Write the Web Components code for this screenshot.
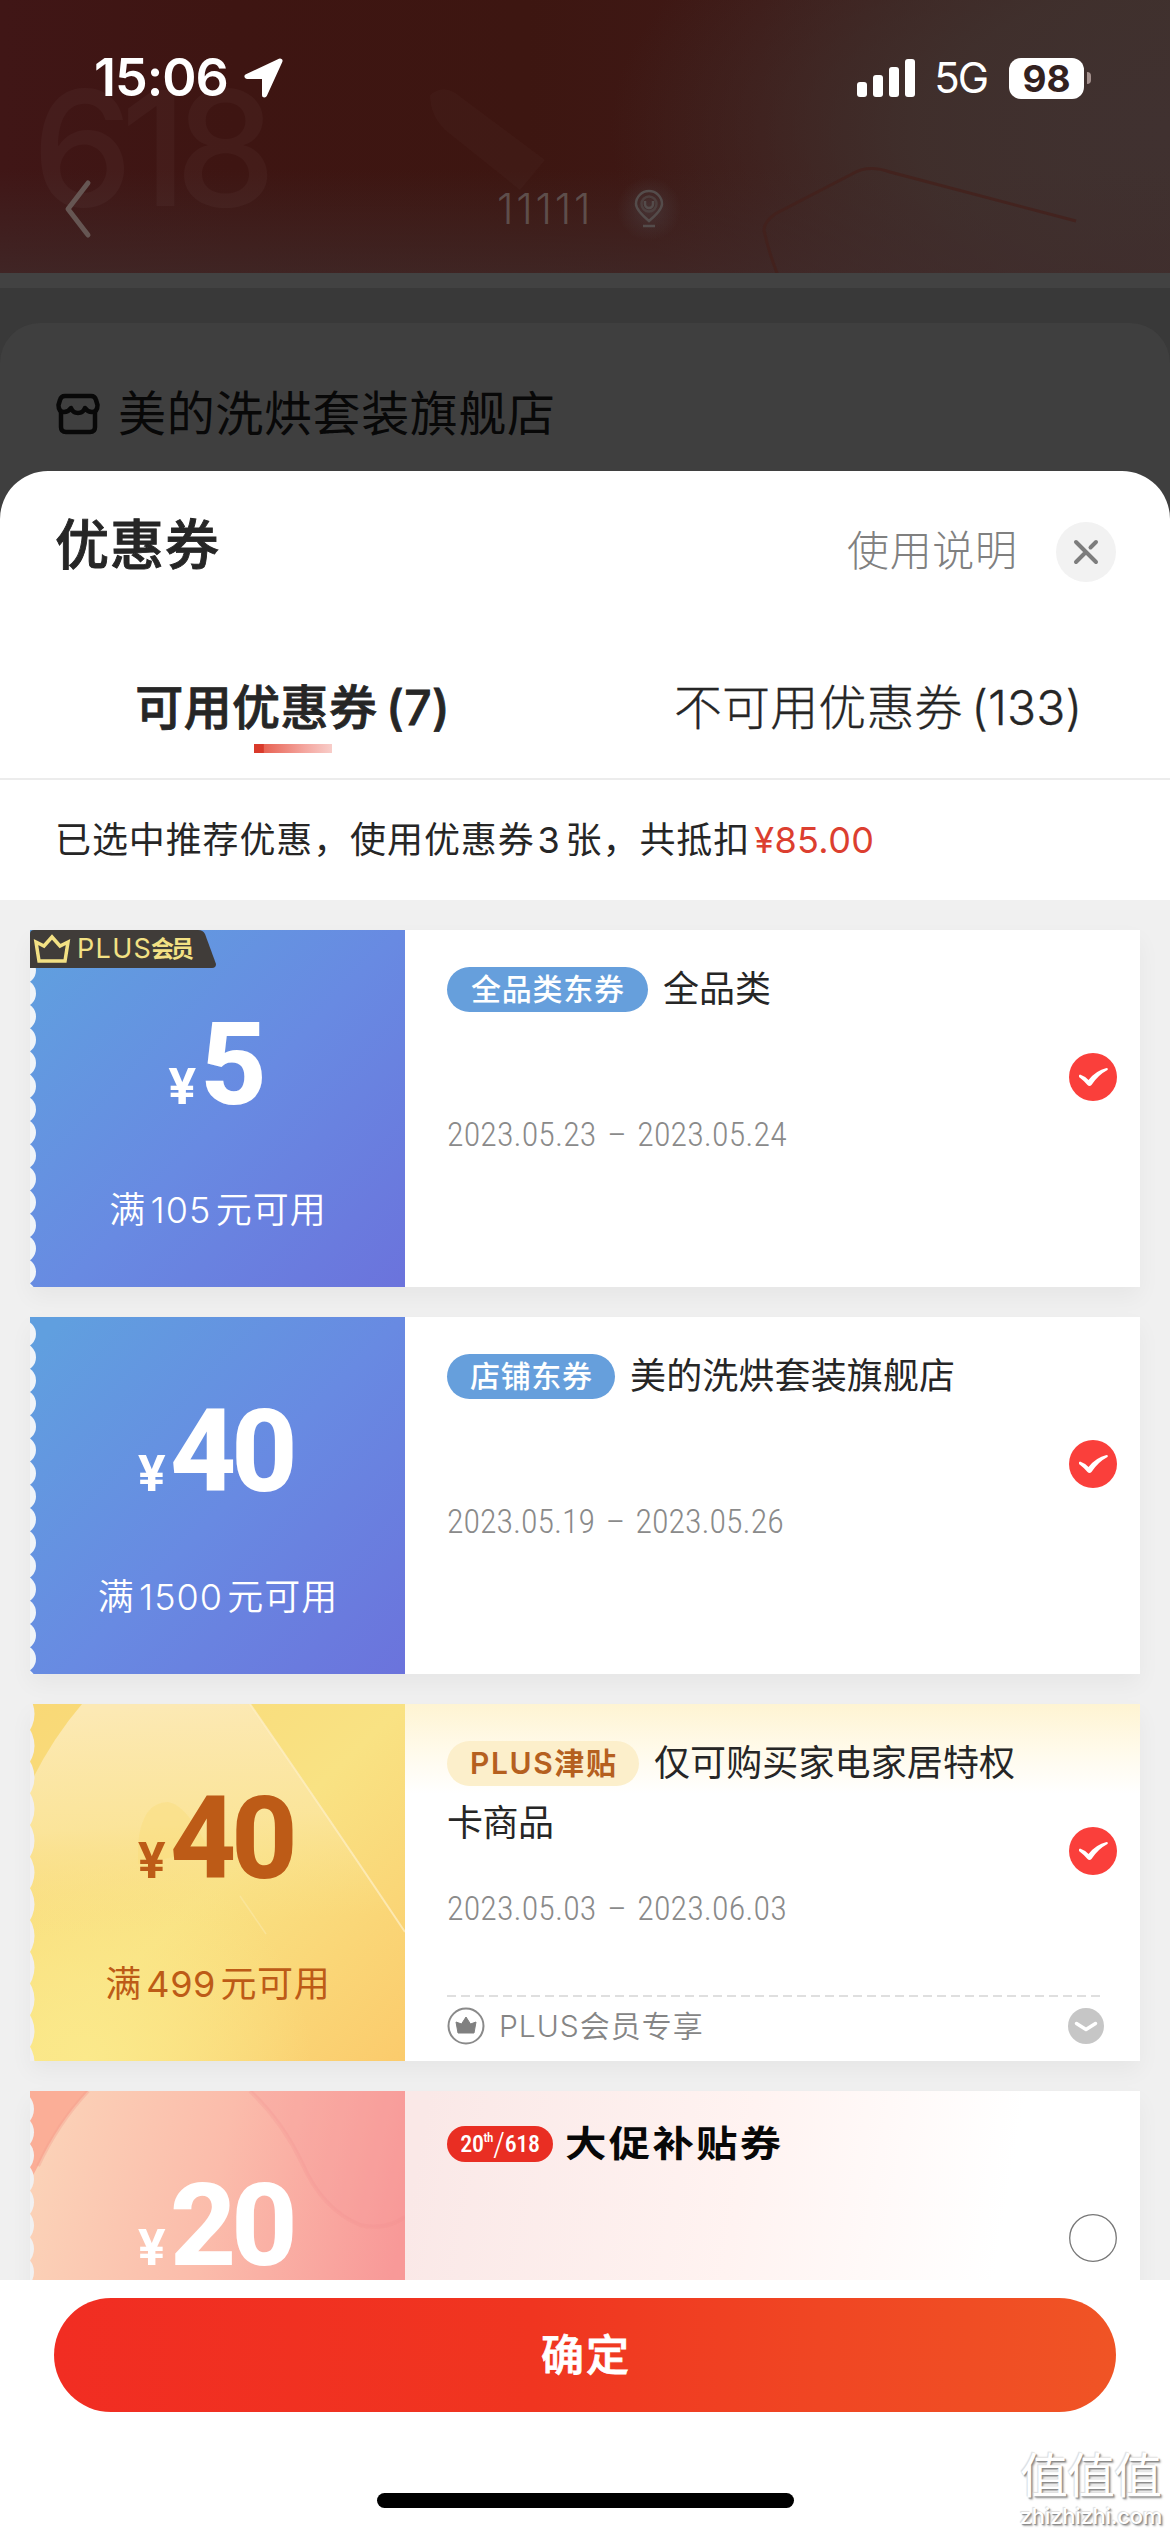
<!DOCTYPE html>
<html lang="zh-CN">
<head>
<meta charset="utf-8">
<title>优惠券</title>
<style>
html,body{margin:0;padding:0}
body{width:1170px;height:2532px;overflow:hidden;background:#3f3f3f;font-family:Inter,"Noto Sans CJK SC",sans-serif;color:#262626}
</style>
</head>
<body>
<coupon-app></coupon-app>
<script>
const define = (name, html, setup) => customElements.define(name, class extends HTMLElement {
  constructor() {
    super();
    this.attachShadow({ mode: 'open' });
  }
  connectedCallback() {
    this.shadowRoot.innerHTML = typeof html === 'function' ? html(this) : html;
    if (setup) setup(this);
  }
});

/* Tracks its text so that the line is exactly `w` pixels wide. */
define('fit-text', '<style>:host{display:inline-block;white-space:nowrap;flex:none}</style><slot></slot>', el => {
  const n = el.textContent.length - 1;
  const w = +el.getAttribute('w');
  const natural = el.offsetWidth;
  if (n < 1 || !natural) return;
  const ls = (w - natural) / n;
  el.style.letterSpacing = ls + 'px';
  el.style.marginRight = -ls + 'px';
});

define('status-bar', `
<style>
:host{display:flex;height:156px;padding:0 79px 0 94px;justify-content:space-between;align-items:center;color:#fff}
.l,.r{display:flex;align-items:center}
.time{font-size:52px;font-weight:600;line-height:60px}
.loc{margin-left:15px}
.net{font-size:42px;line-height:60px;margin-left:19px}
.bat{width:75px;height:41px;border-radius:12px;background:#fff;color:#33211f;font-weight:700;font-size:37px;line-height:41px;text-align:center;margin-left:20px}
.nub{width:4px;height:12px;border-radius:0 4px 4px 0;background:#a4918e;margin-left:3px}
</style>
<div class="l"><fit-text class="time" w="135">15:06</fit-text>
<svg class="loc" width="40" height="40" viewBox="0 0 40 40"><path d="M36 3 L3 18.500 H20.500 V37 Z" fill="#fff" stroke="#fff" stroke-width="5" stroke-linejoin="round"/></svg></div>
<div class="r"><svg width="58" height="38" viewBox="0 0 58 38" fill="#fff"><rect y="23" width="10" height="15" rx="3"/><rect x="16" y="16" width="10" height="22" rx="3"/><rect x="32" y="8" width="10" height="30" rx="3"/><rect x="48" width="10" height="38" rx="3"/></svg>
<fit-text class="net" w="55">5G</fit-text><div class="bat">98</div><div class="nub"></div></div>`);

define('shop-backdrop', `
<style>
:host{display:block;height:471px;background:#3f3f3f}
.hero{height:273px;position:relative;background:
 linear-gradient(to top,rgba(64,45,45,.65),rgba(64,40,40,0) 38%),
 radial-gradient(560px 300px at 1170px 130px,#403130 0%,rgba(64,49,46,.85) 45%,rgba(64,47,44,0) 100%),
 linear-gradient(90deg,#401616 0,#3e1512 20%,#3d1611 45%,#3f1916 65%,#3d2421 85%,#3d2f2b 100%)}
.art{position:absolute;left:0;top:0}
.nav{position:relative;display:flex;height:105px;align-items:center;padding-left:63px}
.addr{margin-left:404px;font-size:42px;font-weight:350;color:#5e4e4b;line-height:50px}
.pin{margin-left:26px}
.strip{height:15px;background:#424242}
.gap{height:35px;background:#393939}
.card{background:#3f3f3f;height:148px;border-radius:40px 40px 0 0;display:flex;align-items:center;padding:0 56px;color:#080808}
.wrap{background:#393939}
.name{font-size:48px;line-height:60px;margin-left:18px}
.row{display:flex;align-items:center;height:60px;margin-top:34px}
</style>
<div class="hero">
<svg class="art" width="1170" height="273" viewBox="0 0 1170 273">
<text x="32" y="206" font-family="Inter,sans-serif" font-size="160" font-weight="500" textLength="244" fill="#fff" opacity=".027">618</text>
<path d="M430 95 Q445 82 462 98 L545 160 L520 190 L445 130 Q430 115 430 95Z" fill="#fff" opacity=".02"/>
<path d="M777 273 Q768 250 764 230 Q764 222 775 214 L852 174 Q868 164 890 172 L1076 221" fill="none" stroke="#44201b" stroke-width="3" opacity=".8"/>
</svg>
<status-bar></status-bar>
<div class="nav">
<svg width="30" height="60" viewBox="0 0 30 60"><path d="M25 4 L5 30 L25 56" fill="none" stroke="#665653" stroke-width="5" stroke-linecap="round" stroke-linejoin="round"/></svg>
<fit-text class="addr" w="94">11111</fit-text>
<svg class="pin" width="64" height="64" viewBox="0 0 64 64"><defs><radialGradient id="g"><stop offset="0" stop-color="#505056" stop-opacity=".4"/><stop offset="1" stop-color="#505056" stop-opacity="0"/></radialGradient></defs><circle cx="32" cy="32" r="32" fill="url(#g)"/><g fill="none" stroke="#544c4b" stroke-width="2.500"><path d="M32 44 Q19 33 19 27 A13 13 0 0 1 45 27 Q45 33 32 44Z"/><path d="M28 24 V27 A4 4 0 0 0 36 27 V24 M26 49 H38"/><circle cx="32" cy="27" r="7.500" opacity=".6"/></g></svg>
</div>
</div>
<div class="strip"></div><div class="gap"></div>
<div class="wrap"><div class="card"><div class="row">
<svg width="44" height="42" viewBox="0 0 44 42" fill="none" stroke="#080808" stroke-width="4.500" stroke-linejoin="round"><path d="M5 17 V34 Q5 39 10 39 H34 Q39 39 39 34 V17"/><path d="M9 3 H35 Q39 3 40 7 L41.500 12 Q41.500 19 36 19 Q31.500 19 29 15 Q27 20 22 20 Q17 20 15 15 Q12.500 19 8 19 Q2.500 19 2.500 12 L4 7 Q5 3 9 3Z"/></svg>
<fit-text class="name" w="437">美的洗烘套装旗舰店</fit-text></div></div></div>`);

define('sheet-header', `
<style>
:host{display:flex;align-items:center;justify-content:space-between;height:134px;padding:14px 54px 0 55px;box-sizing:border-box}
.t{font-size:54px;font-weight:500;-webkit-text-stroke:.9px #262626;line-height:60px;padding-top:1px}
.r{display:flex;align-items:center;height:60px;padding-top:14px}
.help{font-size:42px;font-weight:300;color:#808080;line-height:60px;padding-bottom:2px}
.x{width:60px;height:60px;border-radius:50%;background:#f2f2f2;margin-left:39px;display:flex;align-items:center;justify-content:center}
</style>
<fit-text class="t" w="164">优惠券</fit-text>
<div class="r"><fit-text class="help" w="170">使用说明</fit-text>
<div class="x"><svg width="28" height="28" viewBox="0 0 28 28" stroke="#7d7d7d" stroke-width="4" stroke-linecap="round"><path d="M4 4 24 24 M24 4 18.500 9.500 M14 14 4 24"/></svg></div></div>`);

define('coupon-tabs', `
<style>
:host{display:flex;height:175px;box-sizing:border-box;border-bottom:2px solid #ececec;font-size:48px;line-height:60px}
div{width:585px;display:flex;flex-direction:column;align-items:center;padding-top:73px}
.on{font-weight:500;-webkit-text-stroke:.8px #262626}
.off{font-weight:300;-webkit-text-stroke:.3px #262626;width:auto;padding-left:89px}
i{width:78px;height:9px;margin-top:6px;background:linear-gradient(90deg,#d93a2b 0 12%,#e86354 13%,#f4a69f 65%,#f8cdc9)}
.n{margin-left:.18em}
</style>
<div class="on"><fit-text w="314">可用优惠券<span class="n">(7)</span></fit-text><i></i></div>
<div class="off"><fit-text w="408">不可用优惠券<span class="n">(133)</span></fit-text></div>`);

define('coupon-summary', `
<style>
:host{display:flex;height:120px;align-items:center;padding-left:55px;font-size:36px;line-height:60px}
span{margin:0 .14em 0 .08em}
b{font-weight:400;color:#dc3f30;margin-left:5px}
</style>
<fit-text w="694">已选中推荐优惠，使用优惠券<span>3</span>张，共抵扣</fit-text><b><fit-text w="120">¥85.00</fit-text></b>`);

define('coupon-tag', `
<style>
:host{display:inline-flex;align-items:center;justify-content:center;height:45px;border-radius:23px;background:#669fdc;color:#fff;font-size:30px;font-weight:500;line-height:45px;flex:none}
:host([kind=plus]){background:#fcefcb;color:#b5601f;font-weight:600}
:host([kind=promo]){height:36px;background:#e92e23;font:500 24px/36px Roboto,sans-serif;font-stretch:85%;letter-spacing:-.3px;margin-bottom:12px}
</style><slot></slot>`, el => { el.style.width = el.getAttribute('w') + 'px'; });

const scallops = (pitch, depth, first, color) => {
  const r = ((pitch / 2) ** 2 + depth ** 2) / (2 * depth);
  let s = '';
  for (let y = first; y < 372; y += pitch) s += `<circle cx="${depth - r}" cy="${y}" r="${r}"/>`;
  return `<g fill="${color}">${s}</g>`;
};
const art = {
  blue: `<defs><linearGradient id="b" x1="0" y1="0.100" x2="1" y2="1"><stop offset="0" stop-color="#609fdf"/><stop offset=".5" stop-color="#688ae2"/><stop offset="1" stop-color="#6b73dc"/></linearGradient></defs>
   <rect width="375" height="357" fill="url(#b)"/>` + scallops(23.2, 6, 17, '#f0f4f8'),
  gold: `<defs><linearGradient id="b" x1="0" y1="0" x2="1" y2="1"><stop offset="0" stop-color="#f9d876"/><stop offset=".5" stop-color="#f9e283"/><stop offset="1" stop-color="#fbcb6c"/></linearGradient>
   <linearGradient id="l" x1=".4" y1="0" x2=".5" y2="1"><stop offset="0" stop-color="#fce9b4"/><stop offset=".45" stop-color="#fbe59d" stop-opacity=".9"/><stop offset=".85" stop-color="#fade87" stop-opacity="0"/></linearGradient>
   <radialGradient id="y" cx=".15" cy="1" r=".6"><stop offset="0" stop-color="#fbe98b"/><stop offset="1" stop-color="#fbe98b" stop-opacity="0"/></radialGradient></defs>
   <rect width="375" height="357" fill="url(#b)"/><rect width="375" height="357" fill="url(#y)"/>
   <path d="M52 0 H220 Q296 110 375 228 V260 H0 V80 Q22 35 52 0Z" fill="url(#l)"/>
   <path d="M220 0 Q296 110 375 228" fill="none" stroke="#fdf0c8" stroke-width="2" opacity=".7"/>
   <path d="M108 140 Q112 98 138 98 Q152 100 168 126 L180 146 L108 160Z" fill="#f9dc78" opacity=".4"/>
   <path d="M210 192 236 230" stroke="#fbe9a8" stroke-width="1.500" opacity=".6"/>` + scallops(31.7, 4.5, 10, '#f1eff0'),
  pink: `<defs><linearGradient id="b" x1="0" y1=".15" x2="1" y2=".35"><stop offset="0" stop-color="#fbd3b8"/><stop offset=".5" stop-color="#fbbcab"/><stop offset="1" stop-color="#f89998"/></linearGradient></defs>
   <rect width="375" height="357" fill="url(#b)"/>
   <path d="M0 0 H58 Q28 32 8 75 L0 90Z" fill="#fbae97"/><path d="M58 0 Q28 32 8 75" fill="none" stroke="#f5a08f" stroke-width="4" opacity=".4"/>
   <path d="M220 0 Q252 30 272 72 Q292 118 330 134 Q355 140 375 126 V0Z" fill="#f79c9b" opacity=".25"/>
   <path d="M220 0 Q252 30 272 72 Q292 118 330 134 Q355 140 375 126" fill="none" stroke="#f08e8f" stroke-width="4" opacity=".22"/>` + scallops(23.3, 4, 18, '#f1f1f2')
};

define('check-mark', el => `
<style>:host{display:block;width:48px;height:48px}</style>` + (el.hasAttribute('on') ?
`<svg width="48" height="48" viewBox="0 0 48 48"><circle cx="24" cy="24" r="24" fill="#fa3f3b"/><path d="M11 21.500 Q15.500 23 19.500 27 Q27 17.500 37.500 15 Q39.500 15 38.500 17 Q29 22 22.500 32 Q20.500 34 18.500 32 Q14 27 10 24 Q9.500 21.500 11 21.500Z" fill="#fff"/></svg>` :
`<svg width="48" height="48" viewBox="0 0 48 48"><circle cx="24" cy="24" r="23.300" fill="#fff" stroke="#777" stroke-width="1.300"/></svg>`));

define('coupon-card', el => `
<style>
:host{display:flex;width:1110px;height:357px;background:#fff;box-shadow:0 10px 22px rgba(0,0,0,.045);flex:none}
:host([theme=gold]){background:linear-gradient(#fef4d2,#fffaea 45px,#fff 90px)}
:host([theme=pink]){background:linear-gradient(100deg,#fae8e7 34%,#fff3f1 62%,#fff 85%)}
.left{position:relative;width:375px;height:357px;color:#fff;flex:none}
:host([theme=gold]) .left{color:#bd5b17}
.art{position:absolute;left:0;top:0}
.in{position:relative;display:flex;flex-direction:column;align-items:center;padding-top:75px}
.price{display:flex;align-items:baseline;height:120px;line-height:120px;font-family:Roboto,sans-serif;font-weight:800;font-size:115px;gap:4px}
.yen{font-family:Inter,sans-serif;font-size:50px;font-weight:700}
.cond{font-size:36px;line-height:50px;margin-top:60px;font-weight:360}
:host([theme=gold]) .cond{font-weight:400}
.cond span{margin:0 .12em}
.badge{position:absolute;left:0;top:0}
.body{flex:1;position:relative;display:flex;flex-direction:column;padding:29px 36px 0 42px;font-size:36px}
.title{line-height:60px;width:590px;height:60px;display:flex;align-items:center}
.date{color:#8a8a8a;font:350 34px/40px Roboto,sans-serif;font-stretch:84%;margin-top:95px}
.date i{font-style:normal;margin:0 3px}
:host([two]) .date{margin-top:35px}
.check{position:absolute;right:23px;top:123px}
</style>
<div class="left"><svg class="art" width="375" height="357" viewBox="0 0 375 357">${art[el.getAttribute('theme')]}</svg>
<div class="in"><div class="price"><span class="yen">¥</span><fit-text w="${el.getAttribute('pw')}">${el.getAttribute('price')}</fit-text></div>
${el.hasAttribute('min') ? `<div class="cond"><fit-text w="${el.getAttribute('cw')}">满<span>${el.getAttribute('min')}</span>元可用</fit-text></div>` : ''}</div>
<div class="badge"><slot name="badge"></slot></div></div>
<div class="body"><div class="title"><slot name="title"></slot></div><slot name="more"></slot>
${el.hasAttribute('from') ? `<div class="date"><fit-text w="${el.getAttribute('dw')}">${el.getAttribute('from')} <i>–</i> ${el.getAttribute('to')}</fit-text></div>` : ''}
<slot name="foot"></slot>
<check-mark class="check" ${el.hasAttribute('checked') ? 'on' : ''}></check-mark></div>`);

define('plus-badge', `
<style>
:host{display:flex;align-items:center;width:186px;height:38px;color:#f3e184;font-size:27px;line-height:38px;clip-path:path("M4 0 H168 Q173 0 175 4 L186 34 Q186 38 182 38 H0 V4 Q0 0 4 0Z");background:#403c39}
svg{margin:0 6px 0 3px}b{font-weight:600;font-size:23px}
</style>
<svg width="38" height="30" viewBox="0 0 38 30"><path d="M3 8 L11 12 L19 3 L27 12 L35 8 L32 27 H6Z" fill="none" stroke="#f3e184" stroke-width="3.500"/></svg><fit-text w="74">PLUS</fit-text><b><fit-text w="43">会员</fit-text></b>`);

define('plus-foot', `
<style>
:host{display:flex;align-items:center;width:657px;height:61px;margin-top:67px;font-size:30px;color:#858585;line-height:40px;box-sizing:border-box;
background:repeating-linear-gradient(90deg,#dfdfdf 0 9px,transparent 9px 14px) 0 0/100% 2px no-repeat}
.t{margin-left:14px;margin-right:auto;font-weight:330}
</style>
<svg width="38" height="38" viewBox="0 0 38 38"><circle cx="19" cy="19" r="17.500" fill="#fff" stroke="#8a8a8a" stroke-width="2"/><path d="M9 15 L14.500 17 L19 10 L23.500 17 L29 15 L27 26 H11Z" fill="#808080" stroke="#808080" stroke-linejoin="round"/></svg>
<span class="t"><fit-text w="204">PLUS会员专享</fit-text></span>
<svg width="36" height="36" viewBox="0 0 36 36"><circle cx="18" cy="18" r="18" fill="#c6c6c6"/><path d="M8.500 15.500 L18 21.500 L27.500 15.500" fill="none" stroke="#fff" stroke-width="3.500" stroke-linecap="round" stroke-linejoin="round"/></svg>`);

define('confirm-bar', `
<style>
:host{display:flex;flex-direction:column;align-items:center;position:relative;height:252px;background:#fff;box-sizing:border-box;padding-top:18px}
.btn{width:1062px;height:114px;border-radius:57px;background:linear-gradient(90deg,#f12d22,#f03520 45%,#f04623 72%,#f05425);color:#fff;font-size:43px;font-weight:500;-webkit-text-stroke:.8px #fff;line-height:114px;text-align:center}
.home{width:417px;height:15px;border-radius:8px;background:#000;margin-top:81px}
.wm{position:absolute;right:7px;top:168px;width:144px;color:#fff;text-shadow:1px 1px 1px #888,-1px -1px 1px #ddd,2px 2px 2px #aaa;display:flex;flex-direction:column;align-items:center}
.a{font-size:48px;font-weight:400;line-height:56px}.b{font-size:22px;font-weight:500;line-height:24px}
</style>
<div class="btn"><fit-text w="88">确定</fit-text></div><div class="home"></div>
<div class="wm"><fit-text class="a" w="142">值值值</fit-text><fit-text class="b" w="142">zhizhizhi.com</fit-text></div>`);

define('coupon-app', `
<style>
:host{display:flex;flex-direction:column;width:1170px;height:2532px;overflow:hidden}
.sheet{background:#fff;border-radius:48px 48px 0 0;height:2061px;display:flex;flex-direction:column}
.list{background:#f0f0f0;height:1380px;box-sizing:border-box;padding:30px 30px 0;display:flex;flex-direction:column;gap:30px;overflow:hidden;flex:none}
.gap{margin-left:15px}
.more{line-height:60px;font-size:36px;height:60px}
sup{font-size:13px;line-height:13px;align-self:flex-start;margin-top:5px;letter-spacing:-.5px}
.slash{font-weight:300;font-size:34px}
.promo{margin:0 0 12px 12px;font-weight:700;font-size:36px;color:#080808;transform:scaleX(1.15);transform-origin:0 50%}
</style>
<shop-backdrop></shop-backdrop>
<div class="sheet">
<sheet-header></sheet-header><coupon-tabs></coupon-tabs><coupon-summary></coupon-summary>
<div class="list">
<coupon-card theme="blue" price="5" pw="60" min="105" cw="216" from="2023.05.23" to="2023.05.24" dw="340" checked>
<plus-badge slot="badge"></plus-badge>
<coupon-tag slot="title" w="201"><fit-text w="153">全品类东券</fit-text></coupon-tag><fit-text slot="title" class="gap" w="108">全品类</fit-text></coupon-card>
<coupon-card theme="blue" price="40" pw="128" min="1500" cw="240" from="2023.05.19" to="2023.05.26" dw="337" checked>
<coupon-tag slot="title" w="168"><fit-text w="122">店铺东券</fit-text></coupon-tag><fit-text slot="title" class="gap" w="325">美的洗烘套装旗舰店</fit-text></coupon-card>
<coupon-card theme="gold" price="40" pw="128" min="499" cw="225" from="2023.05.03" to="2023.06.03" dw="340" checked two>
<coupon-tag slot="title" kind="plus" w="192"><fit-text w="146">PLUS津贴</fit-text></coupon-tag><fit-text slot="title" class="gap" w="361">仅可购买家电家居特权</fit-text>
<div slot="more" class="more"><fit-text w="107">卡商品</fit-text></div>
<plus-foot slot="foot"></plus-foot></coupon-card>
<coupon-card theme="pink" price="20" pw="128">
<coupon-tag slot="title" kind="promo" w="106">20<sup>th</sup><span class="slash">/</span>618</coupon-tag><fit-text slot="title" class="promo" w="188">大促补贴券</fit-text></coupon-card>
</div>
<confirm-bar></confirm-bar>
</div>`);
</script>
</body>
</html>
